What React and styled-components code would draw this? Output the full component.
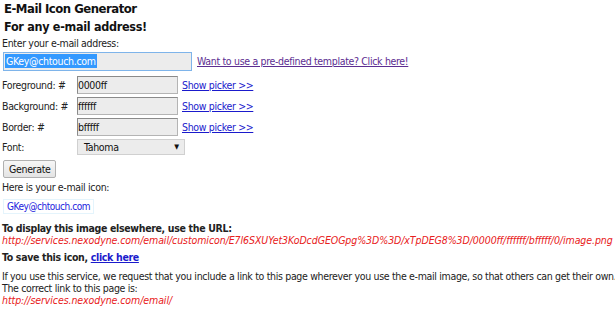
import styled, { createGlobalStyle } from 'styled-components';

const GlobalStyle = createGlobalStyle`
  body {
    margin: 0;
    background: #fff;
    font-family: "DejaVu Sans Condensed", "DejaVu Sans", sans-serif;
    font-size: 10.5px;
    letter-spacing: -0.33px;
    color: #222;
  }
`;

const Page = styled.div`
  padding: 0 0 0 2px;
  display: flex;
  flex-direction: column;
  align-items: flex-start;
`;

const Title = styled.h1`
  margin: 0 0 0 2px;
  font-size: 13px;
  line-height: 17px;
  font-weight: bold;
  letter-spacing: -0.5px;
  color: #111;
`;

const Subtitle = styled.h2`
  margin: 2px 0 0 2px;
  font-size: 12.5px;
  line-height: 16px;
  font-weight: bold;
  letter-spacing: -0.3px;
  color: #111;
`;

const Line = styled.div`
  line-height: 12px;
  margin-top: ${(p) => p.$top || 0}px;
  font-weight: ${(p) => (p.$bold ? 'bold' : 'normal')};
  white-space: nowrap;
`;

const EmailRow = styled.div`
  display: flex;
  align-items: baseline;
  gap: 5px;
  margin: 3px 0 0 1px;
`;

const EmailInput = styled.div`
  width: 185px;
  height: 17px;
  border: 1px solid #7eb4ea;
  background: #ececec;
  padding: 0 1px;
  line-height: 17px;
`;

const Selected = styled.span`
  background: #3399ff;
  color: #fff;
  padding: 1px 1px;
`;

const Link = styled.a`
  color: ${(p) => (p.$visited ? '#5c2d91' : '#1a1acc')};
  text-decoration: underline;
  cursor: pointer;
`;

const FormGrid = styled.div`
  display: grid;
  grid-template-columns: 71px auto auto;
  column-gap: 4px;
  row-gap: 3px;
  margin-top: 5px;
  align-items: baseline;
`;

const Label = styled.div`
  line-height: 12px;
  white-space: nowrap;
`;

const TextBox = styled.div`
  width: 98px;
  height: 16px;
  border: 1px solid #b4b4b4;
  border-top-color: #8a8a8a;
  border-left-color: #8a8a8a;
  background: #ececec;
  padding: 0 1px 0 0;
  line-height: 17px;
  color: #111;
`;

const Select = styled.div`
  grid-column: span 2;
  width: 108px;
  height: 16px;
  border: 1px solid #d0d0d0;
  background: #ececec;
  display: flex;
  justify-content: space-between;
  align-items: center;
  padding: 0 5px 0 6px;
  box-sizing: border-box;
  line-height: 16px;
  color: #111;
`;

const Arrow = styled.span`
  font-size: 7px;
  letter-spacing: 0;
`;

const Button = styled.button`
  margin: 5px 0 0 1px;
  height: 18px;
  padding: 0 5px;
  font-family: inherit;
  font-size: 10.5px;
  letter-spacing: -0.33px;
  border: 1px solid #b0b0b0;
  background: linear-gradient(#f6f6f6, #e4e4e4);
  border-radius: 2px;
  color: #111;
`;

const IconBox = styled.div`
  margin: 6px 0 0 1px;
  padding: 0 3px;
  border: 1px solid #e4f4fc;
  color: #2222dd;
  font-size: 10px;
  letter-spacing: -0.45px;
  line-height: 13px;
`;

const Url = styled.div`
  color: #e82020;
  font-style: italic;
  line-height: 12px;
  letter-spacing: -0.08px;
  margin-top: ${(p) => p.$top || 0}px;
  white-space: nowrap;
`;

export default function App() {
  return (
    <>
      <GlobalStyle />
      <Page>
        <Title>E-Mail Icon Generator</Title>
        <Subtitle>For any e-mail address!</Subtitle>
        <Line $top={2}>Enter your e-mail address:</Line>
        <EmailRow>
          <EmailInput>
            <Selected>GKey@chtouch.com</Selected>
          </EmailInput>
          <Link $visited>Want to use a pre-defined template? Click here!</Link>
        </EmailRow>
        <FormGrid>
          <Label>Foreground: #</Label>
          <TextBox>0000ff</TextBox>
          <Link>Show picker &gt;&gt;</Link>
          <Label>Background: #</Label>
          <TextBox>ffffff</TextBox>
          <Link>Show picker &gt;&gt;</Link>
          <Label>Border: #</Label>
          <TextBox>bfffff</TextBox>
          <Link>Show picker &gt;&gt;</Link>
          <Label>Font:</Label>
          <Select>
            Tahoma <Arrow>▼</Arrow>
          </Select>
        </FormGrid>
        <Button>Generate</Button>
        <Line $top={3}>Here is your e-mail icon:</Line>
        <IconBox>GKey@chtouch.com</IconBox>
        <Line $top={8} $bold>To display this image elsewhere, use the URL:</Line>
        <Url>http://services.nexodyne.com/email/customicon/E7l6SXUYet3KoDcdGEOGpg%3D%3D/xTpDEG8%3D/0000ff/ffffff/bfffff/0/image.png</Url>
        <Line $top={5} $bold>
          To save this icon, <Link>click here</Link>
        </Line>
        <Line $top={7}>
          If you use this service, we request that you include a link to this page wherever you use the e-mail image, so that others can get their own.
        </Line>
        <Line>The correct link to this page is:</Line>
        <Url>http://services.nexodyne.com/email/</Url>
      </Page>
    </>
  );
}
